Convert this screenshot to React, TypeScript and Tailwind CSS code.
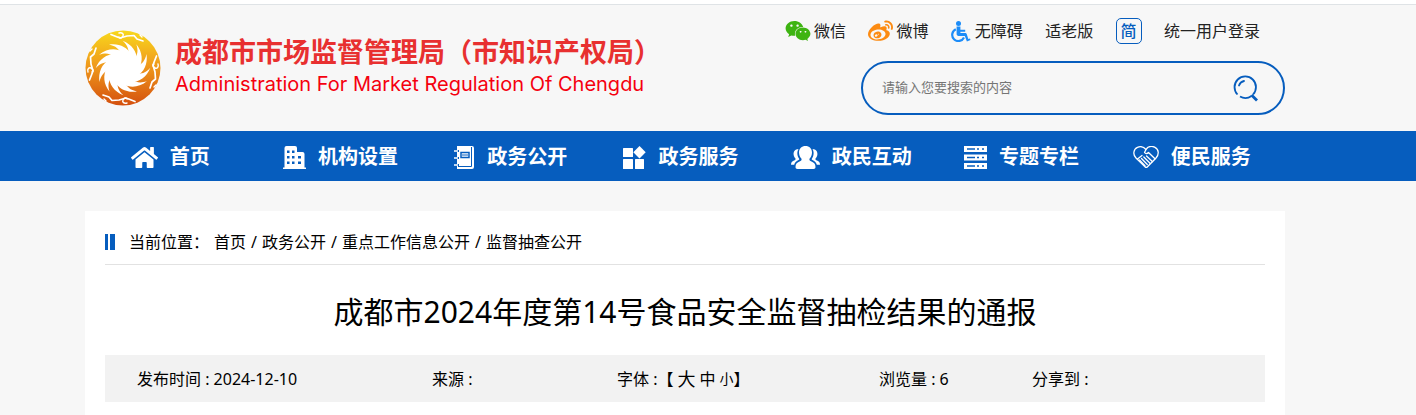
import type { ReactNode } from 'react';
import { FaHome, FaWeibo, FaWeixin } from 'react-icons/fa';

interface NavItem {
  label: string;
  icon: ReactNode;
}

const WheelchairIcon = () => (
  <svg width="20" height="21" viewBox="0 0 20 21" aria-hidden="true">
    <circle cx="7.500" cy="2.500" r="2.500" fill="#1c8cf8" />
    <path d="M5.600 5.500h3.800v3.200h4.800v2H9.400V12H14c1 0 1.500.4 1.800 1.200L17.300 18l1.700-.5.500 1.600-3.600 1.300L13.800 15H7.500c-1.200 0-1.900-.8-1.900-1.900Z" fill="#1c8cf8" />
    <path d="M4.800 8.200A6.200 6.200 0 1 0 13 16.500" fill="none" stroke="#1c8cf8" strokeWidth="2.200" />
  </svg>
);

const BuildingIcon = () => (
  <svg width="23" height="23" viewBox="0 0 23 23" fill="currentColor" aria-hidden="true">
    <path
      fillRule="evenodd"
      d="M1.500 2a2 2 0 0 1 2-2h8.500a2 2 0 0 1 2 2v4h5.500a2 2 0 0 1 2 2v13.500H23V23H0v-1.500h1.500ZM4 4.500v2.500h2.500V4.500Zm5 0v2.500h2.500V4.500ZM4 10v2.500h2.500V10Zm5 0v2.500h2.500V10Zm6 0v2.500h3V10ZM4 15.500v2.500h2.500v-2.500Zm5 0v2.500h2.500v-2.500Zm6 0v2.500h3v-2.500Z"
    />
  </svg>
);

const NotebookIcon = () => (
  <svg width="21" height="23" viewBox="0 0 21 23" fill="none" aria-hidden="true">
    <path d="M3 0h15a2 2 0 0 1 2 2v19a2 2 0 0 1-2 2H3v-3h2v-2H3v-5h2v-2H3V6h2V4H3Z" fill="currentColor" />
    <path d="M17.500 1v19.500H4" stroke="#065dbe" strokeWidth="1" />
    <path d="M7 6.500h8v5H7Z" stroke="#065dbe" strokeWidth="1.500" />
    <path d="M8 9h6" stroke="#065dbe" strokeWidth="1" />
    <path d="M0 5h4M0 12h4M0 19h4" stroke="currentColor" strokeWidth="1.600" />
  </svg>
);

const BlocksIcon = () => (
  <svg width="23" height="23" viewBox="0 0 23 23" fill="currentColor" aria-hidden="true">
    <rect x="0" y="2" width="10" height="9" rx="0.500" />
    <rect x="0" y="13" width="10" height="10" rx="0.500" />
    <rect x="12" y="13" width="9" height="10" rx="0.500" />
    <path d="M16.500 0l6.200 6.200-6.200 6.200-6.200-6.200Z" />
  </svg>
);

const PeopleIcon = () => (
  <svg width="29" height="23" viewBox="0 0 29 23" fill="currentColor" aria-hidden="true">
    <path d="M14.500 0c3.800 0 6.500 2.600 6.500 6.500 0 2.500-1 5-2.500 6.300-.4 1.500.5 2 2 2.700 2.700 1.100 4 2.500 4 5.500 0 1.300-.6 2-2 2H6.500c-1.400 0-2-.7-2-2 0-3 1.300-4.400 4-5.500 1.500-.7 2.400-1.200 2-2.700C9 11.500 8 9 8 6.500 8 2.600 10.700 0 14.500 0Z" />
    <path d="M7.500 3C4 3.200 2.300 5.500 2.600 8.500c.2 1.800.9 3 1.900 4 .3 1.100-.3 1.500-1.500 2C1 15.400 0 16.500 0 18.800h3.200c.6-2.200 1.900-3.700 4.300-4.800.9-.4 1-.8.5-1.500C6.300 10 5.600 6 7.500 3ZM21.500 3c3.500.2 5.200 2.500 4.900 5.500-.2 1.800-.9 3-1.900 4-.3 1.100.3 1.500 1.500 2 2 .9 3 2 3 4.300h-3.200c-.6-2.200-1.900-3.700-4.300-4.800-.9-.4-1-.8-.5-1.500C22.700 10 23.400 6 21.500 3Z" />
  </svg>
);

const StackIcon = () => (
  <svg width="23" height="23" viewBox="0 0 23 23" aria-hidden="true">
    {[0, 8.5, 17].map((y) => (
      <g key={y}>
        <rect x="0" y={y} width="23" height="6" fill="currentColor" />
        <path d={`M3 ${y + 3}h8M13 ${y + 3}h2M18 ${y + 3}h2`} stroke="#065dbe" strokeWidth="1.600" />
      </g>
    ))}
  </svg>
);

const HeartHandsIcon = () => (
  <svg
    width="26"
    height="23"
    viewBox="0 0 26 23"
    fill="none"
    stroke="currentColor"
    strokeWidth="1.300"
    strokeLinecap="round"
    strokeLinejoin="round"
    aria-hidden="true"
  >
    <path d="M12 20.800 3 12C-.5 8.500.5 3 4.500 1.300 8-.1 11 1 13 3.500 15-.1 19-.1 22 1.300c4 2 4.200 7.200 1 10.700l-8.500 8.800c-.8.8-1.700.8-2.500 0Z" />
    <path d="M13 3.500 11.500 6.500c1 1.500 2.800 1.300 4 0l6.500 6.300M13.500 10l5.800 5.500M10.800 11l6.200 6.300M8.500 12.500l5.800 6M6.500 14l5.500 5.800M4.500 13l4.500-3.500" />
  </svg>
);

const SunBirdLogo = () => (
  <svg width="76" height="76" viewBox="-38 -38 76 76" aria-hidden="true">
    <defs>
      <linearGradient id="sunbird" x1="0" y1="0" x2="0" y2="1">
        <stop offset="0" stopColor="#f8d81c" />
        <stop offset="0.450" stopColor="#f09c1c" />
        <stop offset="1" stopColor="#d4500e" />
      </linearGradient>
    </defs>
    <circle r="37.500" fill="url(#sunbird)" />
    <circle r="17" fill="#fff" />
    {[0, 30, 60, 90, 120, 150, 180, 210, 240, 270, 300, 330].map((a) => (
      <path key={a} transform={`rotate(${a})`} d="M8-14C4-21-4-25-14-23.500-7-22-4-19-2-14Z" fill="#fff" />
    ))}
    {[0, 90, 180, 270].map((a) => (
      <g key={a} transform={`rotate(${a})`} fill="none" stroke="#fff" strokeLinecap="round" strokeLinejoin="round">
        <path d="M-12-33.500-7-31.500-3-30 4-32 11-32.500 14-29 20-27" strokeWidth="1.700" />
        <path d="M-4-35C-1-36 1-34 0-32S-3-29-4-31M17-33l2 2" strokeWidth="1.400" />
      </g>
    ))}
  </svg>
);

const SearchIcon = () => (
  <svg width="26" height="28" viewBox="0 0 26 28" fill="none" stroke="#065dbe" strokeWidth="1.800" aria-hidden="true">
    <path d="M4.500 20.500A10.700 10.700 0 1 1 20 20.500M7 22.500A10.700 10.700 0 0 0 18.500 22" />
    <path d="M6 11.500A7 7 0 0 1 11 7" strokeLinecap="round" />
    <path d="M18.500 21 24 26.500" strokeWidth="2.800" />
  </svg>
);

const navItems: NavItem[] = [
  { label: '首页', icon: <FaHome size={27} /> },
  { label: '机构设置', icon: <BuildingIcon /> },
  { label: '政务公开', icon: <NotebookIcon /> },
  { label: '政务服务', icon: <BlocksIcon /> },
  { label: '政民互动', icon: <PeopleIcon /> },
  { label: '专题专栏', icon: <StackIcon /> },
  { label: '便民服务', icon: <HeartHandsIcon /> },
];

const crumbs = ['首页', '政务公开', '重点工作信息公开', '监督抽查公开'];

function Container({ children }: { children: ReactNode }) {
  return (
    <div className="pr-[46px]">
      <div className="mx-auto max-w-[1200px]">{children}</div>
    </div>
  );
}

function Header() {
  return (
    <header className="border-t-4 border-white">
      <div className="border-t border-[#dfe3e6]">
        <Container>
          <div className="flex h-[126px] items-start justify-between">
            <a href="#" className="flex items-center gap-[14px] pt-[25px]">
              <SunBirdLogo />
              <span className="flex flex-col pb-1">
                <span className="text-[27px] leading-9 font-bold text-[#e83030]">成都市市场监督管理局（市知识产权局）</span>
                <span className="font-['Inter'] text-xl leading-7 text-[#f5000f]">
                  Administration For Market Regulation Of Chengdu
                </span>
              </span>
            </a>
            <div className="w-[424px] pt-3">
              <div className="-ml-[76px] flex h-7 items-center justify-between pr-[25px] text-[#222]">
                <a href="#" className="flex items-center gap-[3px]">
                  <FaWeixin size={26} color="#3eb412" />
                  微信
                </a>
                <a href="#" className="flex items-center gap-[3px]">
                  <FaWeibo size={25} color="#fc8b12" />
                  微博
                </a>
                <a href="#" className="flex items-center gap-1">
                  <WheelchairIcon />
                  无障碍
                </a>
                <a href="#">适老版</a>
                <button
                  type="button"
                  className="flex size-[26px] items-center justify-center rounded-[5px] border border-[#065dbe] font-medium text-[#065dbe]"
                >
                  简
                </button>
                <a href="#">统一用户登录</a>
              </div>
              <form className="mt-4 flex h-[54px] items-center rounded-full border-2 border-[#065dbe] pr-6 pl-[19px]">
                <input
                  type="text"
                  aria-label="搜索"
                  placeholder="请输入您要搜索的内容"
                  className="min-w-0 flex-1 bg-transparent text-[13px] outline-none placeholder:text-[#757575]"
                />
                <button type="button" aria-label="搜索">
                  <SearchIcon />
                </button>
              </form>
            </div>
          </div>
        </Container>
      </div>
    </header>
  );
}

function MainNav() {
  return (
    <nav className="bg-[#065dbe] text-white">
      <Container>
        <ul className="flex h-[50px] pr-2">
          {navItems.map((item) => (
            <li key={item.label} className="flex-1 basis-0">
              <a href="#" className="flex h-full items-center justify-center gap-3 pt-[2px] text-xl font-bold whitespace-nowrap">
                {item.icon}
                {item.label}
              </a>
            </li>
          ))}
        </ul>
      </Container>
    </nav>
  );
}

function ArticleMeta() {
  return (
    <div className="grid h-[47px] grid-cols-[295fr_185fr_262fr_153fr_233fr] items-center bg-[#f2f2f2] pl-8">
      <span>发布时间 : 2024-12-10</span>
      <span>来源 :</span>
      <span className="flex items-center">
        字体 :【
        <button type="button" className="ml-1 text-lg">大</button>
        <button type="button" className="ml-1">中</button>
        <button type="button" className="ml-1 text-sm">小</button>
        】
      </span>
      <span>浏览量 : 6</span>
      <span>分享到 :</span>
    </div>
  );
}

export default function App() {
  return (
    <div className="flow-root min-h-screen bg-[#f7f7f7] font-['Noto_Sans','Noto_Sans_CJK_SC',sans-serif] text-base text-black">
      <Header />
      <MainNav />
      <Container>
        <main className="mt-[30px] bg-white px-5 pt-2 pb-[13px]">
          <div className="flex h-[46px] items-center border-b border-[#e2e2e2]">
            <span className="mr-[14px] flex h-4 gap-[2px]">
              <i className="w-[3px] bg-[#065dbe]" />
              <i className="w-[5px] bg-[#065dbe]" />
            </span>
            <span className="mr-[5px]">当前位置：</span>
            {crumbs.map((crumb, i) => (
              <span key={crumb}>
                {i > 0 && <span className="mx-[5px]">/</span>}
                <a href="#">{crumb}</a>
              </span>
            ))}
          </div>
          <h1 className="pt-[26px] pb-[22px] text-center text-3xl leading-[42px]">
            成都市2024年度第14号食品安全监督抽检结果的通报
          </h1>
          <ArticleMeta />
        </main>
      </Container>
    </div>
  );
}
